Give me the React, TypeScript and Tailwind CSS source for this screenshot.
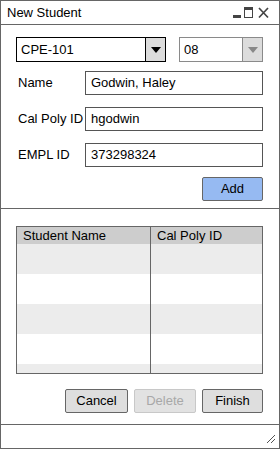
import { ReactNode } from "react";

const font = { fontFamily: '"Liberation Sans", Arial, sans-serif' };

function Caret({ color }: { color: string }) {
  return (
    <svg width="10" height="6" viewBox="0 0 10 6">
      <path d="M0 0 L10 0 L5 6 Z" fill={color} />
    </svg>
  );
}

function Select({ value, width, active }: { value: string; width: string; active?: boolean }) {
  return (
    <div
      className={`${width} h-[25px] flex items-stretch bg-white border ${
        active ? "border-black" : "border-[#8a8a8a]"
      }`}
    >
      <span className="flex-1 pl-[4px] text-[13px] leading-[23px] text-black">{value}</span>
      <span
        className={`w-[20px] flex items-center justify-center bg-[#dcdcdc] border-l ${
          active ? "border-black" : "border-[#8a8a8a]"
        }`}
      >
        <Caret color={active ? "#000" : "#888"} />
      </span>
    </div>
  );
}

function Field({ label, value }: { label: string; value: string }) {
  return (
    <div className="flex items-center h-[24px]">
      <span className="w-[69px] pl-[2px] text-[13px] text-black">{label}</span>
      <div className="flex-1 h-[24px] border border-[#555] bg-white pl-[5px] text-[13px] leading-[21px] text-black">
        {value}
      </div>
    </div>
  );
}

function Btn({ children, width, kind }: { children: ReactNode; width: string; kind?: "primary" | "disabled" }) {
  const look =
    kind === "primary"
      ? "bg-[#96baf2] border-[#666] text-black"
      : kind === "disabled"
        ? "bg-[#e2e2e2] border-[#c8c8c8] text-[#a8a8a8]"
        : "bg-[#dedede] border-[#666] text-black";
  return (
    <div
      className={`${width} h-[24px] rounded-[2px] border flex items-center justify-center text-[13px] ${look}`}
    >
      {children}
    </div>
  );
}

const rows = [0, 1, 2, 3, 4];

export default function App() {
  return (
    <div className="w-[280px] h-[449px] bg-white border border-[#666] flex flex-col" style={font}>
      <div className="h-[24px] border-b border-[#666] flex items-center justify-between pl-[6px] pr-[7px]">
        <span className="text-[13px] text-black">New Student</span>
        <svg width="42" height="14" viewBox="0 0 42 14" className="mt-[1px]">
          <rect x="3" y="9" width="8" height="3" fill="#444" />
          <rect x="14.5" y="1.5" width="8" height="10" fill="none" stroke="#444" />
          <rect x="14" y="1" width="9" height="3" fill="#444" />
          <path d="M29 2 L38 11.5 M38 2 L29 11.5" stroke="#444" strokeWidth="1.7" />
        </svg>
      </div>

      <div className="h-[184px] border-b border-[#666] pl-[15px] pr-[16px] pt-[12px] flex flex-col">
        <div className="flex gap-[13px]">
          <Select value="CPE-101" width="w-[150px]" active />
          <Select value="08" width="w-[84px]" />
        </div>
        <div className="mt-[9px] flex flex-col gap-[12px]">
          <Field label="Name" value="Godwin, Haley" />
          <Field label="Cal Poly ID" value="hgodwin" />
          <Field label="EMPL ID" value="373298324" />
        </div>
        <div className="mt-[10px] flex justify-end">
          <Btn width="w-[61px]" kind="primary">
            Add
          </Btn>
        </div>
      </div>

      <div className="h-[216px] border-b border-[#666] pl-[15px] pr-[16px] pt-[17px] flex flex-col">
        <div className="h-[148px] border border-[#666] flex flex-col overflow-hidden">
          <div className="h-[17px] flex bg-[#cdcdcd] text-[13px] text-black leading-[17px]">
            <span className="w-[134px] pl-[6px] border-r border-[#666]">Student Name</span>
            <span className="flex-1 pl-[6px]">Cal Poly ID</span>
          </div>
          {rows.map((r) => (
            <div key={r} className={`h-[30px] shrink-0 flex ${r % 2 === 0 ? "bg-[#ececec]" : "bg-white"}`}>
              <span className="w-[134px] border-r border-[#666]" />
              <span className="flex-1" />
            </div>
          ))}
        </div>
        <div className="mt-[15px] flex justify-end gap-[6px]">
          <Btn width="w-[63px]">Cancel</Btn>
          <Btn width="w-[62px]" kind="disabled">
            Delete
          </Btn>
          <Btn width="w-[61px]">Finish</Btn>
        </div>
      </div>

      <div className="flex-1 flex items-end justify-end pr-[3px] pb-[4px]">
        <svg width="10" height="10" viewBox="0 0 10 10">
          <path d="M1 9 L9 1 M5 9 L9 5" stroke="#555" strokeWidth="1" />
        </svg>
      </div>
    </div>
  );
}
